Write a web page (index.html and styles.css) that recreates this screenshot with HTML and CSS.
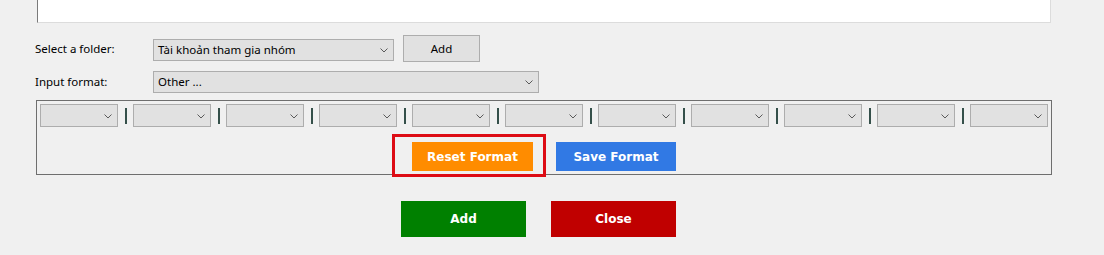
FILE: index.html
```html
<!DOCTYPE html>
<html>
<head>
<meta charset="utf-8">
<link rel="stylesheet" href="styles.css">
</head>
<body>
<div class="page">
  <div class="textarea"></div>

  <div class="row row-folder">
    <span class="label">Select a folder:</span>
    <div class="combo combo-folder"><span class="combo-text">Tài khoản tham gia nhóm</span><svg class="chev" width="8" height="5" viewBox="0 0 8 5"><polyline points="0.5,0.5 4,4 7.5,0.5" fill="none" stroke="#5a5a5a" stroke-width="1"/></svg></div>
    <button class="btn-gray">Add</button>
  </div>

  <div class="row row-format">
    <span class="label">Input format:</span>
    <div class="combo combo-format"><span class="combo-text">Other ...</span><svg class="chev" width="8" height="5" viewBox="0 0 8 5"><polyline points="0.5,0.5 4,4 7.5,0.5" fill="none" stroke="#5a5a5a" stroke-width="1"/></svg></div>
  </div>

  <div class="format-box">
    <div class="parts">
      <div class="combo combo-part"><svg class="chev" width="8" height="5" viewBox="0 0 8 5"><polyline points="0.5,0.5 4,4 7.5,0.5" fill="none" stroke="#5a5a5a" stroke-width="1"/></svg></div>
      <span class="sep"></span>
      <div class="combo combo-part"><svg class="chev" width="8" height="5" viewBox="0 0 8 5"><polyline points="0.5,0.5 4,4 7.5,0.5" fill="none" stroke="#5a5a5a" stroke-width="1"/></svg></div>
      <span class="sep"></span>
      <div class="combo combo-part"><svg class="chev" width="8" height="5" viewBox="0 0 8 5"><polyline points="0.5,0.5 4,4 7.5,0.5" fill="none" stroke="#5a5a5a" stroke-width="1"/></svg></div>
      <span class="sep"></span>
      <div class="combo combo-part"><svg class="chev" width="8" height="5" viewBox="0 0 8 5"><polyline points="0.5,0.5 4,4 7.5,0.5" fill="none" stroke="#5a5a5a" stroke-width="1"/></svg></div>
      <span class="sep"></span>
      <div class="combo combo-part"><svg class="chev" width="8" height="5" viewBox="0 0 8 5"><polyline points="0.5,0.5 4,4 7.5,0.5" fill="none" stroke="#5a5a5a" stroke-width="1"/></svg></div>
      <span class="sep"></span>
      <div class="combo combo-part"><svg class="chev" width="8" height="5" viewBox="0 0 8 5"><polyline points="0.5,0.5 4,4 7.5,0.5" fill="none" stroke="#5a5a5a" stroke-width="1"/></svg></div>
      <span class="sep"></span>
      <div class="combo combo-part"><svg class="chev" width="8" height="5" viewBox="0 0 8 5"><polyline points="0.5,0.5 4,4 7.5,0.5" fill="none" stroke="#5a5a5a" stroke-width="1"/></svg></div>
      <span class="sep"></span>
      <div class="combo combo-part"><svg class="chev" width="8" height="5" viewBox="0 0 8 5"><polyline points="0.5,0.5 4,4 7.5,0.5" fill="none" stroke="#5a5a5a" stroke-width="1"/></svg></div>
      <span class="sep"></span>
      <div class="combo combo-part"><svg class="chev" width="8" height="5" viewBox="0 0 8 5"><polyline points="0.5,0.5 4,4 7.5,0.5" fill="none" stroke="#5a5a5a" stroke-width="1"/></svg></div>
      <span class="sep"></span>
      <div class="combo combo-part"><svg class="chev" width="8" height="5" viewBox="0 0 8 5"><polyline points="0.5,0.5 4,4 7.5,0.5" fill="none" stroke="#5a5a5a" stroke-width="1"/></svg></div>
      <span class="sep"></span>
      <div class="combo combo-part"><svg class="chev" width="8" height="5" viewBox="0 0 8 5"><polyline points="0.5,0.5 4,4 7.5,0.5" fill="none" stroke="#5a5a5a" stroke-width="1"/></svg></div>
    </div>
    <div class="format-actions">
      <div class="highlight-wrap">
        <button class="btn-flat btn-orange">Reset Format</button>
        <span class="highlight"></span>
      </div>
      <button class="btn-flat btn-blue">Save Format</button>
    </div>
  </div>

  <div class="actions">
    <button class="btn-flat btn-big btn-green">Add</button>
    <button class="btn-flat btn-big btn-red">Close</button>
  </div>
</div>
</body>
</html>
```

FILE: styles.css
```css
html, body {
  margin: 0;
  padding: 0;
  background: #f0f0f0;
}

body {
  font-family: "Noto Sans", "Open Sans", sans-serif;
  font-size: 11.5px;
  color: #000;
}

.page {
  width: 1104px;
  height: 255px;
  overflow: hidden;
}

.textarea {
  margin-left: 37px;
  width: 1014px;
  height: 23px;
  box-sizing: border-box;
  background: #fff;
  border-left: 1px solid #7a7a7a;
  border-right: 1px solid #dcdcdc;
  border-bottom: 1px solid #dcdcdc;
}

.row {
  display: flex;
  align-items: flex-start;
  padding-left: 35px;
}

.row-folder {
  margin-top: 12px;
  height: 27px;
}

.row-format {
  margin-top: 9px;
  height: 22px;
}

.label {
  width: 118px;
  line-height: 22px;
}

.row-folder .label {
  margin-top: 3px;
}

.combo {
  box-sizing: border-box;
  display: flex;
  align-items: center;
  justify-content: space-between;
  background: #e1e1e1;
  border: 1px solid #adadad;
  height: 22px;
  padding: 0 5px 0 4px;
}

.combo-text {
  white-space: nowrap;
  line-height: 20px;
}

.chev {
  display: block;
  margin-left: auto;
  margin-top: 1px;
}

.combo-folder {
  width: 241px;
  margin-top: 4px;
}

.combo-format {
  width: 386px;
}

.btn-gray {
  box-sizing: border-box;
  margin-left: 9px;
  width: 77px;
  height: 27px;
  background: #e1e1e1;
  border: 1px solid #adadad;
  font-family: "Noto Sans", "Open Sans", sans-serif;
  font-size: 11.5px;
  color: #000;
  padding: 0;
}

.format-box {
  box-sizing: border-box;
  margin-top: 7px;
  margin-left: 36px;
  width: 1016px;
  height: 75px;
  border: 1px solid #6e6e6e;
  padding: 3px 0 0 3px;
}

.parts {
  display: flex;
  align-items: center;
  height: 23px;
}

.combo-part {
  width: 78px;
  height: 23px;
}

.sep {
  display: block;
  width: 2px;
  height: 16px;
  margin: 0 6px 0 7px;
  background: #35504a;
}

.format-actions {
  display: flex;
  justify-content: center;
  gap: 23px;
  margin-top: 15px;
  padding-right: 3px;
}

.btn-flat {
  box-sizing: border-box;
  border: none;
  padding: 0;
  color: #fff;
  font-family: "DejaVu Sans", Verdana, sans-serif;
  font-weight: bold;
  font-size: 12px;
}

.format-actions .btn-flat {
  height: 29px;
}

.btn-orange {
  display: block;
  width: 121px;
  background: #ff8c00;
}

.btn-blue {
  width: 120px;
  background: #3179e4;
}

.highlight-wrap {
  position: relative;
}

.highlight {
  position: absolute;
  left: -20px;
  top: -8px;
  right: -13px;
  bottom: -6px;
  border: 3px solid #dd0c15;
  pointer-events: none;
}

.actions {
  display: flex;
  gap: 25px;
  margin-top: 26px;
  margin-left: 401px;
}

.btn-big {
  width: 125px;
  height: 36px;
}

.btn-green {
  background: #008000;
}

.btn-red {
  background: #c00000;
}
```
